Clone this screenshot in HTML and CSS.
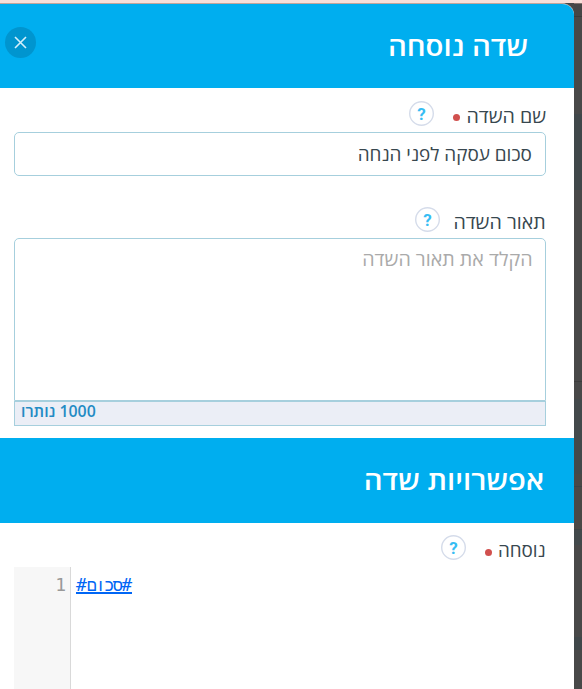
FILE: index.html
```html
<!DOCTYPE html>
<html lang="he" dir="rtl">
<head>
<meta charset="utf-8">
<title>שדה נוסחה</title>
<link rel="stylesheet" href="styles.css">
</head>
<body>
<div class="page">
  <main class="panel">
    <header class="banner banner-top">
      <h1 class="title title-main">שדה נוסחה</h1>
      <button class="close" aria-label="סגור"><svg width="31" height="31" viewBox="0 0 31 31"><path d="M10 10L21 21M21 10L10 21"/></svg></button>
    </header>
    <section class="fields">
      <div class="label-row row-name">
        <span class="label label-name">שם השדה</span><i class="required"></i>
        <svg class="help" viewBox="0 0 25 25"><circle cx="12.5" cy="12.5" r="11.8"/><text x="12.5" y="18.5">?</text></svg>
      </div>
      <div class="input"><span class="value">סכום עסקה לפני הנחה</span></div>
      <div class="label-row row-desc">
        <span class="label label-desc">תאור השדה</span>
        <svg class="help" viewBox="0 0 25 25"><circle cx="12.5" cy="12.5" r="11.8"/><text x="12.5" y="18.5">?</text></svg>
      </div>
      <div class="textarea"><span class="placeholder">הקלד את תאור השדה</span></div>
      <div class="counter"><span class="remaining">1000 נותרו</span></div>
    </section>
    <header class="banner banner-options">
      <h2 class="title title-options">אפשרויות שדה</h2>
    </header>
    <section class="formula">
      <div class="label-row row-formula">
        <span class="label label-formula">נוסחה</span><i class="required"></i>
        <svg class="help" viewBox="0 0 25 25"><circle cx="12.5" cy="12.5" r="11.8"/><text x="12.5" y="18.5">?</text></svg>
      </div>
      <div class="editor" dir="ltr">
        <div class="gutter">1</div>
        <div class="code"><span class="token"><bdi>#</bdi><bdi class="word">סכום</bdi><bdi>#</bdi></span></div>
      </div>
    </section>
  </main>
  <aside class="backdrop"></aside>
</div>
</body>
</html>
```
FILE: styles.css
```css
* { box-sizing: border-box; }
body {
  margin: 0;
  height: 689px;
  overflow: hidden;
  background: #484848;
  color: #38474f;
  font-family: "Open Sans", "Liberation Sans", sans-serif;
}
.page {
  display: flex;
  direction: ltr;
  height: 689px;
  border-top: 3px solid #f8dfd9;
  background: #484848;
}
.panel {
  direction: rtl;
  width: 574px;
  height: 686px;
  border-top: 1px solid #c3a49b;
  border-top-right-radius: 12px;
  background: #fff;
  overflow: hidden;
}
.backdrop {
  flex: 1;
  border-top: 1px solid #85736f;
  background: linear-gradient(#464646 0 12px, #3b3b3b 12px 13px, #484848 13px 110px, #40474a 110px 186px, #484848 186px 377px, #3c3c3c 377px 378px, #484848 378px 395px, #43494b 395px 470px, #4a4846 470px 482px, #3c4346 482px 483px, #4a4846 483px 525px, #3d4446 525px 526px, #42494b 526px 541px, #484848 541px 633px, #40474a 633px 646px, #484848 646px);
}
.banner {
  display: flex;
  align-items: center;
  justify-content: space-between;
  background: #00aeef;
  color: #fff;
}
.banner-top { height: 84px; padding: 0 46px 0 5px; }
.banner-options { height: 85px; padding: 0 30px 2px; }
.title {
  margin: 0;
  font-size: 27px;
  font-weight: 600;
  line-height: 36px;
  white-space: nowrap;
  transform: scaleX(1.086);
  transform-origin: right;
}
.close {
  width: 31px;
  height: 31px;
  margin-bottom: 7px;
  padding: 0;
  border: 0;
  border-radius: 50%;
  background: #0095cf;
}
.close svg { display: block; fill: none; stroke: #d5effb; stroke-width: 1.6; }
.fields { height: 350px; padding: 12px 28px 0 14px; }
.label-row { display: flex; height: 32px; }
.label {
  margin-top: 4px;
  font-size: 18px;
  line-height: 25px;
  white-space: nowrap;
  transform: scaleX(1.09);
  transform-origin: right;
}
.label-name { margin-left: 6px; }
.label-desc { margin-top: 3px; margin-left: 8px; }
.label-formula { margin-top: 3px; margin-left: 1px; transform: scaleX(1.045); }
.required { width: 7px; height: 7px; margin: 14px 7px 0 0; border-radius: 50%; background: #d1504e; }
.help { width: 25px; height: 25px; margin-right: 19px; }
.row-name .help { margin-top: 1px; }
.row-desc { height: 31px; margin-top: 31px; }
.row-desc .help { margin-right: 13px; }
.help circle { fill: #fff; stroke: #d5dcea; stroke-width: 1.4; }
.help text { font: 700 17px Roboto, sans-serif; text-anchor: middle; fill: #37bdf3; }
.input, .textarea {
  border: 1px solid #a6cfdd;
  border-radius: 5px;
  background: #fff;
  padding: 0 13px;
  white-space: nowrap;
}
.value, .placeholder { display: inline-block; transform: scaleX(1.05); transform-origin: right; }
.placeholder { transform: scaleX(1.035); }
.input { height: 44px; font-size: 18px; line-height: 42px; }
.textarea {
  height: 163px;
  border-radius: 5px 5px 0 0;
  padding-top: 6px;
  font-size: 19px;
  line-height: 28px;
  color: #aaa;
}
.counter {
  height: 25px;
  border: 1px solid #a6cfdd;
  background: #ebeef6;
  padding-left: 6px;
  text-align: left;
  font-size: 16px;
  font-weight: 600;
  line-height: 19px;
  color: #238bc4;
}
.remaining { display: inline-block; transform: scaleX(.99); transform-origin: left; }
.formula { padding: 12px 28px 0 14px; }
.editor { display: flex; height: 122px; }
.gutter {
  width: 57px;
  padding: 6px 4px 0 0;
  border-right: 1px solid #d9d9d9;
  background: #f7f7f7;
  color: #999;
  font: 18px/24px "DejaVu Sans Mono", monospace;
  text-align: right;
}
.code { padding: 6px 0 0 5px; font: 18px/24px "DejaVu Sans Mono", monospace; color: #0066f5; }
.token { border-bottom: 2px solid #0066f5; display: inline-block; height: 21px; line-height: 24px; white-space: nowrap; }
.word { font-family: "Liberation Mono", monospace; font-size: 17px; letter-spacing: -1.6px; }
```
